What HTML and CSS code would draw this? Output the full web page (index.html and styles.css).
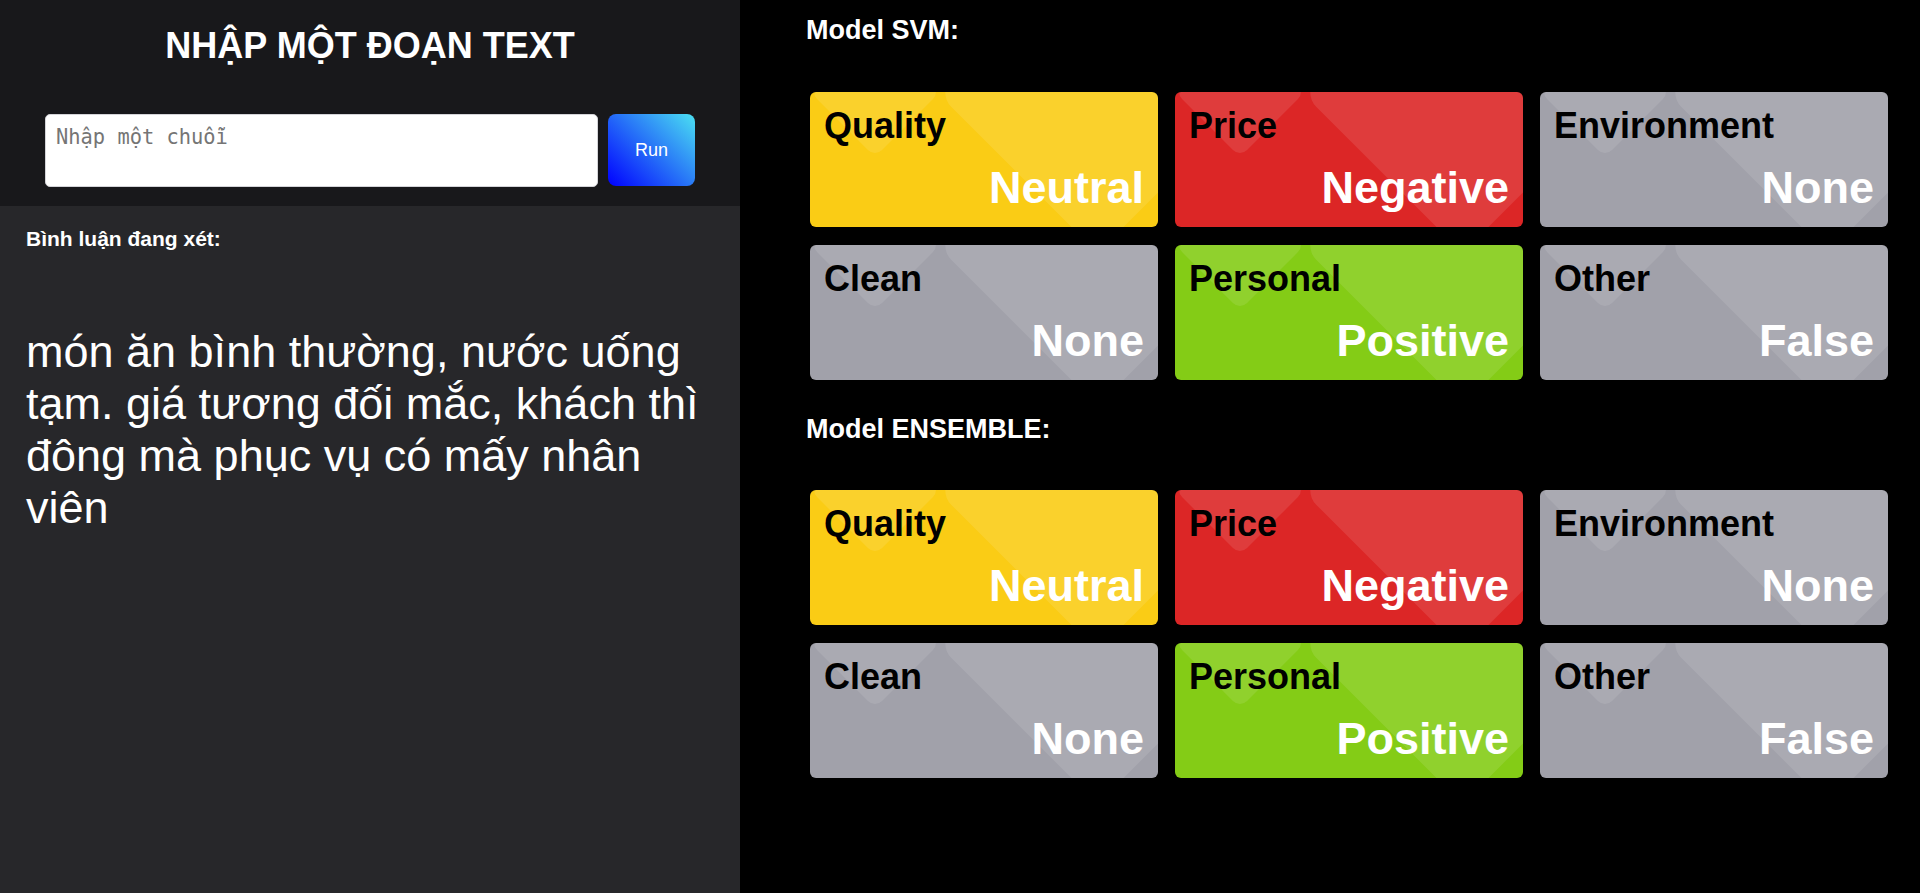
FILE: index.html
```html
<!DOCTYPE html>
<html lang="vi">
<head>
<meta charset="utf-8">
<title>Phân tích bình luận</title>
<link rel="stylesheet" href="styles.css">
</head>
<body>
<div class="app">
  <aside class="left">
    <header class="input-area">
      <h1 class="title">NHẬP MỘT ĐOẠN TEXT</h1>
      <div class="input-row">
        <textarea class="text-input" placeholder="Nhập một chuỗi"></textarea>
        <button class="run-btn" type="button">Run</button>
      </div>
    </header>
    <section class="comment">
      <h3 class="comment-label">Bình luận đang xét:</h3>
      <p class="comment-text">món ăn bình thường, nước uống tạm. giá tương đối mắc, khách thì đông mà phục vụ có mấy nhân viên</p>
    </section>
  </aside>
  <main class="right">
    <section class="model">
      <h3 class="model-label">Model SVM:</h3>
      <div class="grid">
        <div class="card yellow"><div class="aspect">Quality</div><div class="value">Neutral</div></div>
        <div class="card red"><div class="aspect">Price</div><div class="value">Negative</div></div>
        <div class="card gray"><div class="aspect">Environment</div><div class="value">None</div></div>
        <div class="card gray"><div class="aspect">Clean</div><div class="value">None</div></div>
        <div class="card green"><div class="aspect">Personal</div><div class="value">Positive</div></div>
        <div class="card gray"><div class="aspect">Other</div><div class="value">False</div></div>
      </div>
    </section>
    <section class="model model-second">
      <h3 class="model-label">Model ENSEMBLE:</h3>
      <div class="grid">
        <div class="card yellow"><div class="aspect">Quality</div><div class="value">Neutral</div></div>
        <div class="card red"><div class="aspect">Price</div><div class="value">Negative</div></div>
        <div class="card gray"><div class="aspect">Environment</div><div class="value">None</div></div>
        <div class="card gray"><div class="aspect">Clean</div><div class="value">None</div></div>
        <div class="card green"><div class="aspect">Personal</div><div class="value">Positive</div></div>
        <div class="card gray"><div class="aspect">Other</div><div class="value">False</div></div>
      </div>
    </section>
  </main>
</div>
</body>
</html>
```

FILE: styles.css
```css
* { box-sizing: border-box; }

html, body {
  margin: 0;
  padding: 0;
  height: 100%;
}

body {
  font-family: "Liberation Sans", Arial, sans-serif;
  background: #000;
  color: #fff;
}

.app {
  display: flex;
  min-height: 893px;
}

.left {
  width: 740px;
  flex: 0 0 740px;
  display: flex;
  flex-direction: column;
  background: #27272a;
}

.input-area {
  background: #18181b;
  padding: 26px 0 19px;
  display: flex;
  flex-direction: column;
  align-items: center;
}

.title {
  margin: 0;
  font-size: 36px;
  line-height: 40px;
  font-weight: 700;
  color: #fff;
}

.input-row {
  margin-top: 48px;
  display: flex;
  gap: 10px;
  align-items: flex-start;
}

.text-input {
  width: 553px;
  height: 73px;
  border: 1px solid #d4d4d8;
  border-radius: 5px;
  padding: 10px;
  font-family: "DejaVu Sans Mono", monospace;
  font-size: 20.4px;
  color: #111;
  background: #fff;
  resize: none;
  outline: none;
  display: block;
}

.text-input::placeholder {
  color: #757575;
}

.run-btn {
  width: 87px;
  height: 72px;
  border: none;
  border-radius: 8px;
  background: linear-gradient(45deg, #0000ff 0%, #2a7cf7 55%, #4be0f2 100%);
  color: #fff;
  font-family: "Liberation Sans", Arial, sans-serif;
  font-size: 18px;
  cursor: pointer;
}

.comment {
  flex: 1;
  padding: 21px 26px;
}

.comment-label {
  margin: 0;
  font-size: 21px;
  font-weight: 700;
  line-height: normal;
}

.comment-text {
  margin: 75px 0 0;
  font-size: 45px;
  line-height: normal;
  font-weight: 400;
}

.right {
  flex: 1;
  background: #000;
  padding: 15px 32px 0 66px;
}

.model-label {
  margin: 0;
  font-size: 27px;
  font-weight: 700;
  line-height: 31px;
}

.model-second {
  margin-top: 34px;
}

.grid {
  margin: 46px 0 0 4px;
  display: grid;
  grid-template-columns: repeat(3, 348px);
  grid-auto-rows: 135px;
  column-gap: 17px;
  row-gap: 18px;
}

.model-second .grid {
  margin-top: 45px;
}

.card {
  position: relative;
  overflow: hidden;
  border-radius: 6px;
  padding: 13px 14px 13px 14px;
  display: flex;
  flex-direction: column;
  justify-content: space-between;
}

.card::before,
.card::after {
  content: "";
  position: absolute;
  background: rgba(255, 255, 255, 0.1);
  transform: rotate(45deg);
  pointer-events: none;
}

.card::before {
  width: 92px;
  height: 92px;
  left: 19px;
  top: -46px;
  border-radius: 10px;
}

.card::after {
  width: 227px;
  height: 227px;
  left: 174px;
  top: -113px;
  border-radius: 20px;
}

.aspect {
  position: relative;
  z-index: 1;
  color: #000;
  font-size: 36px;
  font-weight: 700;
  line-height: normal;
}

.value {
  position: relative;
  z-index: 1;
  color: #fff;
  font-size: 45px;
  font-weight: 700;
  line-height: normal;
  text-align: right;
}

.yellow { background: #facc15; }
.red { background: #dc2626; }
.gray { background: #a1a1aa; }
.green { background: #84cc16; }
```
